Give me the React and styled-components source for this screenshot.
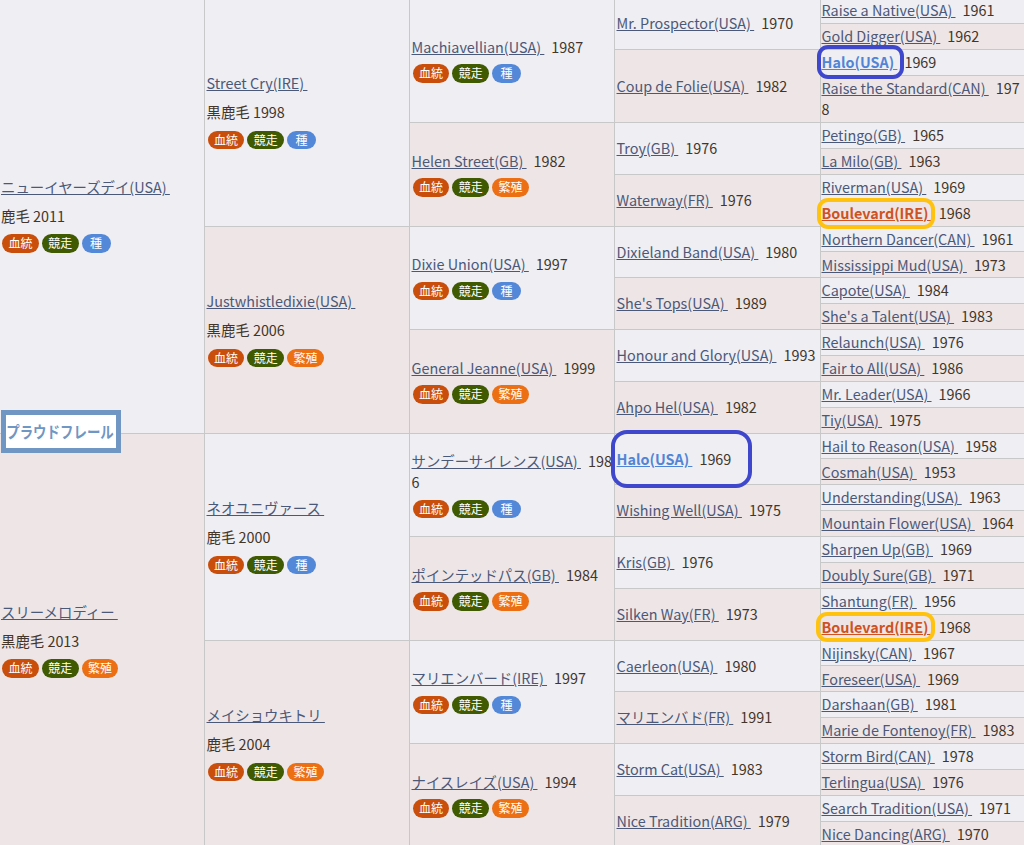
import styled, { createGlobalStyle } from 'styled-components';

const GlobalStyle = createGlobalStyle`
  html, body {
    margin: 0;
    padding: 0;
    background: #eeeef3;
  }
`;

const Page = styled.div`
  position: relative;
  width: 1024px;
  height: 845px;
  overflow: hidden;
  font-family: "Noto Sans CJK JP", "Noto Sans", sans-serif;
  font-size: 14.4px;
  line-height: 21.6px;
  color: #43352a;
`;

const Pedigree = styled.table`
  width: 1024px;
  margin-top: -3px;
  table-layout: fixed;
  border-collapse: collapse;
`;

const Column = styled.col`
  width: ${p => p.$w}px;
`;

const COLUMN_WIDTHS = [204, 205, 205, 206, 204];
const CELL_INSET = [1, 2, 2, 2, 1];

const Cell = styled.td`
  padding: 1.15px 1px 2.15px ${p => CELL_INSET[p.$gen]}px;
  border: 1px solid #c8c8c8;
  border-left-width: ${p => (p.$gen === 0 ? 0 : 1)}px;
  border-right: 0;
  background: ${p => (p.$alt ? '#eee6e6' : '#eeeef3')};
  vertical-align: middle;
  word-break: break-all;
`;

const HorseLink = styled.a`
  color: ${p => (p.$tone === 'blue' ? '#5284d6' : p.$tone === 'red' ? '#cf5222' : '#4c5878')};
  font-weight: ${p => (p.$tone ? 700 : 400)};
  text-decoration: underline;
  white-space: pre-wrap;
`;

const Year = styled.span`
  margin-left: 7px;
`;

const Coat = styled.div`
  margin-top: 7.4px;
  margin-bottom: 8px;
`;

const Badges = styled.div`
  display: flex;
  gap: 3px;
  margin: 7px 0 1px 1px;

  ${Coat} + & {
    margin-top: 0;
  }
`;

const BADGE_COLORS = {
  血統: '#c94e0c',
  競走: '#3f5a00',
  種: '#5388d8',
  繁殖: '#ec6f13',
};

const Badge = styled.span`
  box-sizing: border-box;
  min-width: 29px;
  height: 18.5px;
  padding: 0 6.4px;
  border-radius: 9.5px;
  background: ${p => BADGE_COLORS[p.$kind]};
  color: #ffffff;
  font-size: 12px;
  line-height: 18.5px;
  text-align: center;
`;

const TitleBox = styled.div`
  position: absolute;
  left: 1px;
  top: 410px;
  box-sizing: border-box;
  display: flex;
  align-items: center;
  justify-content: center;
  width: 120px;
  height: 43px;
  border: 5px solid #7096c4;
  background: #ffffff;
  color: #7096c4;
  font-size: 16px;
  font-weight: 700;
  white-space: nowrap;
`;

const TitleText = styled.span`
  flex: none;
  margin-left: -2px;
  transform: scaleX(0.84);
`;

const Ring = styled.div`
  position: absolute;
  left: ${p => p.$x}px;
  top: ${p => p.$y}px;
  box-sizing: border-box;
  width: ${p => p.$w}px;
  height: ${p => p.$h}px;
  border: 4px solid ${p => (p.$yellow ? '#ffc30f' : '#3f48cc')};
  border-radius: ${p => p.$r}px;
`;

const M = ['血統', '競走', '種'];
const F = ['血統', '競走', '繁殖'];

const h = (name, year, extra = {}) => ({ name, year, ...extra });

// 5世代を上から順に: [父, 母] の入れ子
const ped = [
  h('ニューイヤーズデイ(USA)', '鹿毛 2011', { badges: M, block: true, kids: [
    h('Street Cry(IRE)', '黒鹿毛 1998', { badges: M, block: true, kids: [
      h('Machiavellian(USA)', '1987', { badges: M, kids: [
        h('Mr. Prospector(USA)', '1970', { kids: [h('Raise a Native(USA)', '1961'), h('Gold Digger(USA)', '1962')] }),
        h('Coup de Folie(USA)', '1982', { kids: [h('Halo(USA)', '1969', { tone: 'blue' }), h('Raise the Standard(CAN)', '1978')] }),
      ] }),
      h('Helen Street(GB)', '1982', { badges: F, kids: [
        h('Troy(GB)', '1976', { kids: [h('Petingo(GB)', '1965'), h('La Milo(GB)', '1963')] }),
        h('Waterway(FR)', '1976', { kids: [h('Riverman(USA)', '1969'), h('Boulevard(IRE)', '1968', { tone: 'red' })] }),
      ] }),
    ] }),
    h('Justwhistledixie(USA)', '黒鹿毛 2006', { badges: F, block: true, kids: [
      h('Dixie Union(USA)', '1997', { badges: M, kids: [
        h('Dixieland Band(USA)', '1980', { kids: [h('Northern Dancer(CAN)', '1961'), h('Mississippi Mud(USA)', '1973')] }),
        h("She's Tops(USA)", '1989', { kids: [h('Capote(USA)', '1984'), h("She's a Talent(USA)", '1983')] }),
      ] }),
      h('General Jeanne(USA)', '1999', { badges: F, kids: [
        h('Honour and Glory(USA)', '1993', { kids: [h('Relaunch(USA)', '1976'), h('Fair to All(USA)', '1986')] }),
        h('Ahpo Hel(USA)', '1982', { kids: [h('Mr. Leader(USA)', '1966'), h('Tiy(USA)', '1975')] }),
      ] }),
    ] }),
  ] }),
  h('スリーメロディー', '黒鹿毛 2013', { badges: F, block: true, kids: [
    h('ネオユニヴァース', '鹿毛 2000', { badges: M, block: true, kids: [
      h('サンデーサイレンス(USA)', '1986', { badges: M, kids: [
        h('Halo(USA)', '1969', { tone: 'blue', kids: [h('Hail to Reason(USA)', '1958'), h('Cosmah(USA)', '1953')] }),
        h('Wishing Well(USA)', '1975', { kids: [h('Understanding(USA)', '1963'), h('Mountain Flower(USA)', '1964')] }),
      ] }),
      h('ポインテッドパス(GB)', '1984', { badges: F, kids: [
        h('Kris(GB)', '1976', { kids: [h('Sharpen Up(GB)', '1969'), h('Doubly Sure(GB)', '1971')] }),
        h('Silken Way(FR)', '1973', { kids: [h('Shantung(FR)', '1956'), h('Boulevard(IRE)', '1968', { tone: 'red' })] }),
      ] }),
    ] }),
    h('メイショウキトリ', '鹿毛 2004', { badges: F, block: true, kids: [
      h('マリエンバード(IRE)', '1997', { badges: M, kids: [
        h('Caerleon(USA)', '1980', { kids: [h('Nijinsky(CAN)', '1967'), h('Foreseer(USA)', '1969')] }),
        h('マリエンバド(FR)', '1991', { kids: [h('Darshaan(GB)', '1981'), h('Marie de Fontenoy(FR)', '1983')] }),
      ] }),
      h('ナイスレイズ(USA)', '1994', { badges: F, kids: [
        h('Storm Cat(USA)', '1983', { kids: [h('Storm Bird(CAN)', '1978'), h('Terlingua(USA)', '1976')] }),
        h('Nice Tradition(ARG)', '1979', { kids: [h('Search Tradition(USA)', '1971'), h('Nice Dancing(ARG)', '1970')] }),
      ] }),
    ] }),
  ] }),
];

// 葉の数で rowspan を決めて、行ごとにセルを積む
function buildRows(nodes, gen, rows, current) {
  let row = current;
  nodes.forEach((node, i) => {
    const span = 2 ** (4 - gen);
    if (!rows[row]) rows[row] = [];
    rows[row].push({ node, gen, span, alt: i === 1 });
    if (node.kids) buildRows(node.kids, gen + 1, rows, row);
    row += span;
  });
  return rows;
}

function Horse({ node, gen, span, alt }) {
  return (
    <Cell rowSpan={span} $gen={gen} $alt={alt}>
      <HorseLink href="#" $tone={node.tone}>{node.name + ' '}</HorseLink>
      {node.block ? <Coat>{node.year}</Coat> : <Year>{node.year}</Year>}
      {node.badges && (
        <Badges>
          {node.badges.map(b => <Badge key={b} $kind={b}>{b}</Badge>)}
        </Badges>
      )}
    </Cell>
  );
}

function App() {
  const rows = buildRows(ped, 0, [], 0);
  return (
    <Page>
      <GlobalStyle />
      <Pedigree>
        <colgroup>
          {COLUMN_WIDTHS.map((w, i) => <Column key={i} $w={w} />)}
        </colgroup>
        <tbody>
          {rows.map((cells, r) => (
            <tr key={r}>
              {cells.map(c => <Horse key={`${c.gen}-${c.node.name}`} {...c} />)}
            </tr>
          ))}
        </tbody>
      </Pedigree>
      <TitleBox><TitleText>プラウドフレール</TitleText></TitleBox>
      <Ring $x={817} $y={45} $w={87} $h={34} $r={11} />
      <Ring $x={817} $y={198} $w={118} $h={31} $r={11} $yellow />
      <Ring $x={611} $y={430} $w={141} $h={58} $r={16} />
      <Ring $x={816} $y={612} $w={119} $h={30} $r={11} $yellow />
    </Page>
  );
}

export default App;
